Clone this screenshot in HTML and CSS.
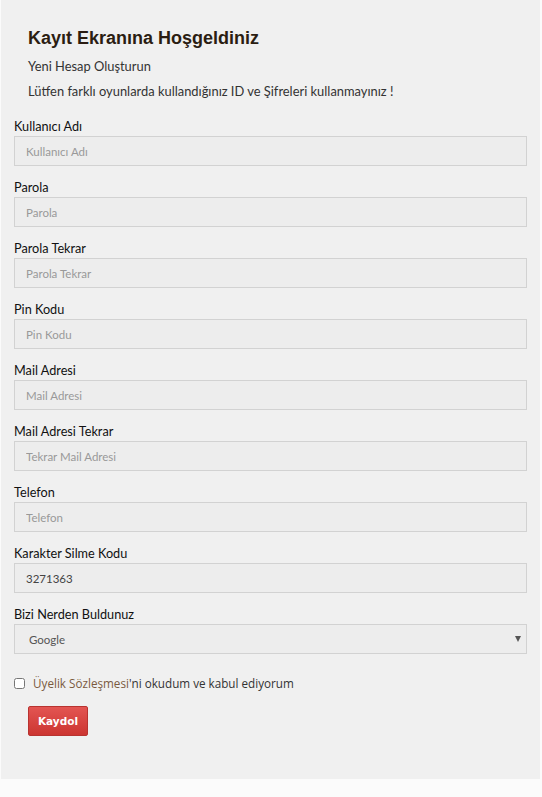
FILE: index.html
```html
<!DOCTYPE html>
<html lang="tr">
<head>
  <meta charset="UTF-8">
  <meta name="viewport" content="width=device-width, initial-scale=1.0">
  <title>Kayıt</title>
  <link rel="stylesheet" href="styles.css">
</head>
<body>
  <div class="panel">
    <div class="intro">
      <h1>Kayıt Ekranına Hoşgeldiniz</h1>
      <p>Yeni Hesap Oluşturun</p>
      <p class="warn">Lütfen farklı oyunlarda kullandığınız ID ve Şifreleri kullanmayınız !</p>
    </div>

    <form class="register">
      <div class="field">
        <label for="user">Kullanıcı Adı</label>
        <input id="user" type="text" placeholder="Kullanıcı Adı">
      </div>
      <div class="field">
        <label for="pass">Parola</label>
        <input id="pass" type="password" placeholder="Parola">
      </div>
      <div class="field">
        <label for="pass2">Parola Tekrar</label>
        <input id="pass2" type="password" placeholder="Parola Tekrar">
      </div>
      <div class="field">
        <label for="pin">Pin Kodu</label>
        <input id="pin" type="text" placeholder="Pin Kodu">
      </div>
      <div class="field">
        <label for="mail">Mail Adresi</label>
        <input id="mail" type="text" placeholder="Mail Adresi">
      </div>
      <div class="field">
        <label for="mail2">Mail Adresi Tekrar</label>
        <input id="mail2" type="text" placeholder="Tekrar Mail Adresi">
      </div>
      <div class="field">
        <label for="tel">Telefon</label>
        <input id="tel" type="text" placeholder="Telefon">
      </div>
      <div class="field">
        <label for="code">Karakter Silme Kodu</label>
        <input id="code" type="text" value="3271363">
      </div>
      <div class="field">
        <label for="from">Bizi Nerden Buldunuz</label>
        <div class="select-wrap">
          <select id="from">
            <option>Google</option>
          </select>
        </div>
      </div>

      <div class="agree">
        <input id="ok" type="checkbox">
        <span><a href="#">Üyelik Sözleşmesi</a>'ni okudum ve kabul ediyorum</span>
      </div>

      <button type="button" class="btn">Kaydol</button>
    </form>
  </div>
</body>
</html>
```

FILE: styles.css
```css
body {
  margin: 0;
  padding: 0;
  background: #fbfbfb;
  font-family: Lato, "Open Sans", sans-serif;
  color: #333;
}
.panel {
  box-sizing: border-box;
  width: 539px;
  height: 779px;
  margin-left: 1px;
  padding: 28px 13px 0 13px;
  background: #f0f0f0;
}
.intro {
  padding-left: 14px;
}
h1 {
  margin: 0;
  font-family: "Liberation Sans", Arial, sans-serif;
  font-size: 18px;
  line-height: 20px;
  font-weight: bold;
  color: #2b1d12;
}
.intro p {
  margin: 8px 0 0;
  font-size: 12.9px;
  line-height: 20px;
  color: #333;
}
.intro p.warn {
  margin-top: 5px;
}
.register {
  margin-top: 15px;
}
.field {
  margin-bottom: 11px;
}
label {
  display: block;
  font-size: 12.7px;
  line-height: 20px;
  color: #111;
}
input[type=text], input[type=password], select {
  display: block;
  box-sizing: border-box;
  width: 100%;
  height: 30px;
  margin: 0;
  padding: 0 11px;
  border: 1px solid #d2d2d2;
  border-radius: 0;
  background: #ededed;
  font-family: Lato, "Open Sans", sans-serif;
  font-size: 11.5px;
  color: #444;
  outline: none;
}
input::placeholder {
  color: #999;
}
.select-wrap {
  position: relative;
}
select {
  -webkit-appearance: none;
  appearance: none;
  padding-left: 14px;
  color: #555;
}
.select-wrap::after {
  content: "";
  position: absolute;
  right: 6px;
  top: 12px;
  border-left: 3px solid transparent;
  border-right: 3px solid transparent;
  border-top: 6px solid #555;
}
.agree {
  display: flex;
  align-items: center;
  margin-top: 19px;
  height: 20px;
  font-family: "Open Sans", sans-serif;
  font-size: 11.7px;
  color: #333;
}
.agree input {
  width: 11px;
  height: 11px;
  margin: 0 8px 0 0;
}
.agree a {
  color: #7a5a3e;
  text-decoration: none;
}
.btn {
  display: block;
  margin: 13px 0 0 14px;
  width: 60px;
  height: 30px;
  padding: 0;
  border: 1px solid #b83330;
  border-radius: 2px;
  background: linear-gradient(#e35552, #cc3531);
  color: #fff;
  font-family: "DejaVu Sans", Verdana, sans-serif;
  font-size: 10.5px;
  font-weight: bold;
  cursor: pointer;
}
```
